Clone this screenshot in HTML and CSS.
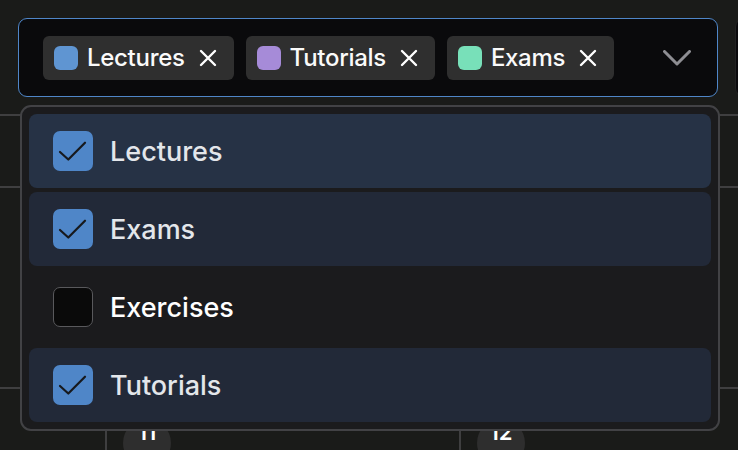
FILE: index.html
```html
<!DOCTYPE html>
<html>
<head>
<meta charset="utf-8">
<link rel="stylesheet" href="styles.css">
</head>
<body>
<div class="page">
  <div class="toolbar">
    <div class="select">
      <div class="chips">
        <div class="chip"><span class="swatch sw-blue"></span><span class="chip-label">Lectures</span><svg class="chip-x" viewBox="0 0 20 20"><path d="M3 3L17 17M17 3L3 17"/></svg></div>
        <div class="chip"><span class="swatch sw-purple"></span><span class="chip-label">Tutorials</span><svg class="chip-x" viewBox="0 0 20 20"><path d="M3 3L17 17M17 3L3 17"/></svg></div>
        <div class="chip"><span class="swatch sw-green"></span><span class="chip-label">Exams</span><svg class="chip-x" viewBox="0 0 20 20"><path d="M3 3L17 17M17 3L3 17"/></svg></div>
      </div>
      <svg class="chevron" viewBox="0 0 28 16"><path d="M1.5 1.5L14 14L26.5 1.5"/></svg>
    </div>
    <div class="select ghost"></div>
  </div>

  <div class="calendar">
    <div class="cal-row r1"></div>
    <div class="cal-row r2"></div>
    <div class="cal-row r3">
      <div class="cell first"></div>
      <div class="cell"><span class="day">11</span></div>
      <div class="cell"><span class="day">12</span></div>
    </div>
  </div>

  <div class="menu">
    <div class="option checked hover"><span class="box"><svg viewBox="0 0 40 40"><path d="M7 21L15.3 28.5L32 11.7"/></svg></span><span class="opt-label">Lectures</span></div>
    <div class="option checked"><span class="box"><svg viewBox="0 0 40 40"><path d="M7 21L15.3 28.5L32 11.7"/></svg></span><span class="opt-label">Exams</span></div>
    <div class="option"><span class="box empty"></span><span class="opt-label">Exercises</span></div>
    <div class="option checked"><span class="box"><svg viewBox="0 0 40 40"><path d="M7 21L15.3 28.5L32 11.7"/></svg></span><span class="opt-label">Tutorials</span></div>
  </div>
</div>
</body>
</html>
```

FILE: styles.css
```css
* { box-sizing: border-box; }
html, body {
  margin: 0;
  padding: 0;
  background: #1a1b19;
  font-family: Inter, "Noto Sans", sans-serif;
  color: #fff;
}
.page {
  position: relative;
  width: 738px;
  height: 450px;
  overflow: hidden;
}
.toolbar {
  display: flex;
  gap: 17px;
  padding: 18px 0 0 18px;
}
.select {
  flex: 0 0 700px;
  height: 79px;
  background: #0a0a0c;
  border: 1.5px solid #4f86c8;
  border-radius: 9px;
  display: flex;
  align-items: center;
  padding: 0 26px 0 24px;
}
.select.ghost {
  flex: 0 0 60px;
  border-color: #222;
}
.chips {
  display: flex;
  gap: 12px;
  flex: 1;
}
.chip {
  height: 44px;
  display: flex;
  align-items: center;
  background: #2f2f2f;
  border-radius: 6px;
  padding: 0 16px 0 11px;
}
.swatch {
  width: 24px;
  height: 24px;
  border-radius: 6px;
  margin-right: 9px;
}
.sw-blue { background: #5f95d2; }
.sw-purple { background: #a68bd8; }
.sw-green { background: #78e0b9; }
.chip-label {
  font-size: 24px;
  font-weight: 500;
  color: #fafafa;
  letter-spacing: -0.3px;
}
.chip-x {
  width: 20px;
  height: 20px;
  margin-left: 13px;
  fill: none;
  stroke: #fff;
  stroke-width: 2.4;
  stroke-linecap: round;
}
.chevron {
  width: 28px;
  height: 16px;
  fill: none;
  stroke: #8e8e93;
  stroke-width: 3;
  stroke-linecap: round;
  stroke-linejoin: round;
}

.calendar {
  margin-top: 17px;
}
.cal-row {
  border-top: 2px solid #3f3f40;
}
.r1 { height: 72px; }
.r2 { height: 201px; }
.r3 {
  display: grid;
  grid-template-columns: 105px 354px 354px;
  height: 80px;
}
.cell {
  border-left: 2px solid #3f3f40;
  padding: 30px 0 0 16px;
}
.cell.first { border-left: none; }
.day {
  display: flex;
  justify-content: center;
  width: 48px;
  height: 48px;
  border-radius: 50%;
  background: #2e2e2e;
  font-size: 22px;
  line-height: 22px;
  padding-top: 2px;
  font-weight: 600;
  color: #fff;
}

.menu {
  position: absolute;
  left: 20px;
  top: 105px;
  width: 700px;
  height: 326px;
  background: #1b1b1d;
  border: 2px solid #424245;
  border-radius: 11px;
  padding: 7px 7px;
  display: flex;
  flex-direction: column;
  gap: 4px;
}
.option {
  height: 74px;
  border-radius: 8px;
  display: flex;
  align-items: center;
  padding-left: 24px;
}
.option.checked { background: #222938; }
.option.hover { background: #263245; }
.box {
  width: 40px;
  height: 40px;
  border-radius: 7px;
  background: #4f86c8;
  margin-right: 17px;
  display: flex;
}
.box svg {
  width: 40px;
  height: 40px;
  fill: none;
  stroke: #17191d;
  stroke-width: 2.2;
  stroke-linecap: round;
  stroke-linejoin: round;
}
.box.empty {
  background: #0a0a0a;
  border: 1.5px solid #59595c;
}
.opt-label {
  font-size: 27px;
  font-weight: 500;
  color: #e3e6ea;
  letter-spacing: 0;
}
.option:not(.checked) .opt-label {
  color: #fff;
}
```
